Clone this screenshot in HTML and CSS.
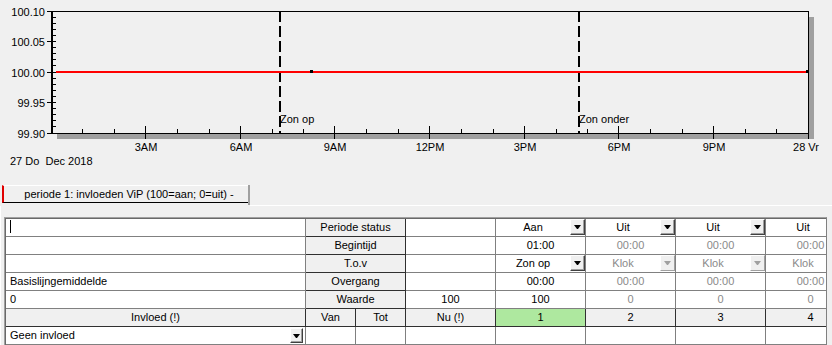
FILE: index.html
```html
<!DOCTYPE html>
<html lang="nl">
<head>
    <meta charset="UTF-8">
    <title>Periode invloeden</title>
    <link rel="stylesheet" href="styles.css">
</head>
<body>
    <svg class="chart" width="832" height="185" viewBox="0 0 832 185">
        <!-- schaduw -->
        <rect x="57" y="134" width="757" height="5" fill="#a0a0a0"/>
        <rect x="809" y="17" width="5" height="122" fill="#a0a0a0"/>

        <!-- kader en assen -->
        <g stroke="#000" shape-rendering="crispEdges" fill="none">
            <path d="M51 11.5H808.5V133.5H51" stroke-width="1"/>
            <path d="M52 11V134" stroke-width="2"/>
            <path d="M47 11.5h9M47 41.5h9M47 72.5h9M47 102.5h9M47 133.5h9"/>
            <path d="M52 17.5h4M52 23.5h4M52 29.5h4M52 35.5h4M52 47.5h4M52 53.5h4M52 59.5h4M52 65.5h4M52 78.5h4M52 84.5h4M52 90.5h4M52 96.5h4M52 108.5h4M52 114.5h4M52 120.5h4M52 126.5h4"/>
            <path d="M145.5 126v13M240.5 126v13M334.5 126v13M429.5 126v13M524.5 126v13M618.5 126v13M713.5 126v13M808.5 133v6"/>
            <path d="M82.5 129v4M114.5 129v4M177.5 129v4M209.5 129v4M272.5 129v4M303.5 129v4M366.5 129v4M398.5 129v4M461.5 129v4M493.5 129v4M556.5 129v4M587.5 129v4M650.5 129v4M682.5 129v4M745.5 129v4M776.5 129v4"/>
            <path d="M280 11V133M579 11V133" stroke-width="2" stroke-dasharray="11 4"/>
        </g>

        <!-- waarde -->
        <rect x="56" y="71" width="752" height="2" fill="#ff0000"/>
        <rect x="310" y="70" width="3" height="3" fill="#000"/>
        <rect x="806" y="70" width="3" height="3" fill="#000"/>

        <g class="ylabels" text-anchor="end">
            <text x="45" y="15.5">100.10</text>
            <text x="45" y="45.5">100.05</text>
            <text x="45" y="76.5">100.00</text>
            <text x="45" y="106.5">99.95</text>
            <text x="45" y="137.5">99.90</text>
        </g>
        <g class="xlabels" text-anchor="middle">
            <text x="146" y="151">3AM</text>
            <text x="241" y="151">6AM</text>
            <text x="335" y="151">9AM</text>
            <text x="430" y="151">12PM</text>
            <text x="525" y="151">3PM</text>
            <text x="619" y="151">6PM</text>
            <text x="714" y="151">9PM</text>
            <text x="806" y="151">28 Vr</text>
        </g>
        <text x="10" y="165" class="date">27 Do  Dec 2018</text>
        <text x="280" y="123">Zon op</text>
        <text x="579" y="123">Zon onder</text>
    </svg>

    <div class="tabbar">
        <div class="tab">periode 1: invloeden ViP (100=aan; 0=uit) -</div>
        <div class="tab-edge"></div>
        <div class="tab-rest"></div>
    </div>

    <div class="page">
        <div class="frame">
            <div class="grid">
                <div class="row">
                    <div class="cell name"><span class="caret"></span></div>
                    <div class="cell label hd">Periode status</div>
                    <div class="cell now"></div>
                    <div class="cell per combo"><span class="txt">Aan</span><span class="drop"></span></div>
                    <div class="cell per combo"><span class="txt">Uit</span><span class="drop"></span></div>
                    <div class="cell per combo"><span class="txt">Uit</span><span class="drop"></span></div>
                    <div class="cell per combo"><span class="txt">Uit</span><span class="drop"></span></div>
                </div>
                <div class="row">
                    <div class="cell name"></div>
                    <div class="cell label hd">Begintijd</div>
                    <div class="cell now"></div>
                    <div class="cell per">01:00</div>
                    <div class="cell per off">00:00</div>
                    <div class="cell per off">00:00</div>
                    <div class="cell per off">00:00</div>
                </div>
                <div class="row">
                    <div class="cell name"></div>
                    <div class="cell label hd">T.o.v</div>
                    <div class="cell now"></div>
                    <div class="cell per combo"><span class="txt">Zon op</span><span class="drop"></span></div>
                    <div class="cell per combo off"><span class="txt">Klok</span><span class="drop"></span></div>
                    <div class="cell per combo off"><span class="txt">Klok</span><span class="drop"></span></div>
                    <div class="cell per combo off"><span class="txt">Klok</span><span class="drop"></span></div>
                </div>
                <div class="row">
                    <div class="cell name">Basislijngemiddelde</div>
                    <div class="cell label hd">Overgang</div>
                    <div class="cell now"></div>
                    <div class="cell per">00:00</div>
                    <div class="cell per off">00:00</div>
                    <div class="cell per off">00:00</div>
                    <div class="cell per off">00:00</div>
                </div>
                <div class="row">
                    <div class="cell name">0</div>
                    <div class="cell label hd">Waarde</div>
                    <div class="cell now">100</div>
                    <div class="cell per">100</div>
                    <div class="cell per off">0</div>
                    <div class="cell per off">0</div>
                    <div class="cell per off">0</div>
                </div>
                <div class="row">
                    <div class="cell name hd">Invloed (!)</div>
                    <div class="cell half hd">Van</div>
                    <div class="cell half hd">Tot</div>
                    <div class="cell now hd">Nu (!)</div>
                    <div class="cell per hd active">1</div>
                    <div class="cell per hd">2</div>
                    <div class="cell per hd">3</div>
                    <div class="cell per hd">4</div>
                </div>
                <div class="row">
                    <div class="cell name combo left"><span class="txt">Geen invloed</span><span class="drop small"></span></div>
                    <div class="cell half"></div>
                    <div class="cell half"></div>
                    <div class="cell now"></div>
                    <div class="cell per"></div>
                    <div class="cell per"></div>
                    <div class="cell per"></div>
                    <div class="cell per"></div>
                </div>
            </div>
        </div>
    </div>
</body>
</html>
```

FILE: styles.css
```css
* {
    box-sizing: border-box;
}
body {
    margin: 0;
    width: 832px;
    height: 345px;
    overflow: hidden;
    background-color: #f0f0f0;
    font-family: "Liberation Sans", Arial, sans-serif;
    font-size: 11px;
    color: #000;
}
.chart {
    display: block;
}
.chart text {
    font-family: "Liberation Sans", Arial, sans-serif;
    font-size: 11px;
    fill: #000;
}
.chart .date {
    white-space: pre;
}

.tabbar {
    display: flex;
    height: 21px;
}
.tab {
    margin-left: 2px;
    width: 246px;
    height: 18px;
    padding-left: 6px;
    border-top: 1px solid #fff;
    border-bottom: 1px solid #000;
    border-left: 2px solid #e00000;
    text-align: center;
    line-height: 16px;
    white-space: nowrap;
}
.tab-edge {
    width: 2px;
    height: 20px;
    background-color: #a0a0a0;
}
.tab-rest {
    flex: 1;
    border-bottom: 1px solid #fff;
}

.page {
    display: flex;
    padding: 11px 0 0 3px;
    border-left: 1px solid #fff;
}
.frame {
    width: 823px;
    height: 128px;
    overflow: hidden;
    border-top: 1px solid #a0a0a0;
    border-left: 1px solid #a0a0a0;
    border-right: 1px solid #808080;
}
.grid {
    width: 900px;
    border-top: 1px solid #696969;
    border-left: 1px solid #696969;
}
.row {
    display: flex;
    height: 18px;
}
.cell {
    flex: none;
    height: 18px;
    line-height: 17px;
    border-right: 1px solid #808080;
    border-bottom: 1px solid #808080;
    background-color: #fff;
    text-align: center;
    white-space: nowrap;
    overflow: hidden;
}
.name {
    width: 300px;
    padding-left: 4px;
    text-align: left;
}
.label {
    width: 100px;
}
.half {
    width: 50px;
}
.now,
.per {
    width: 90px;
}
.hd {
    background-color: #f0f0f0;
    border-right-color: #303030;
    border-bottom-color: #303030;
    padding-left: 0;
    text-align: center;
}
.hd.active {
    background-color: #aee89f;
}
.off {
    color: #8a8a8a;
}

.caret {
    display: inline-block;
    width: 1px;
    height: 13px;
    margin-top: 1px;
    background-color: #000;
    vertical-align: top;
}

.combo {
    display: flex;
}
.combo .txt {
    flex: 1;
}
.combo.left .txt {
    text-align: left;
}
.drop {
    flex: none;
    display: flex;
    align-items: center;
    justify-content: center;
    width: 15px;
    height: 16px;
    border: 1px solid;
    border-color: #fff #404040 #404040 #fff;
    background-color: #f0f0f0;
    box-shadow: inset -1px -1px 0 #a0a0a0;
}
.drop::before {
    content: "";
    width: 1px;
    height: 0;
    border-left: 3px solid transparent;
    border-right: 3px solid transparent;
    border-top: 4px solid #000;
}
.off .drop {
    border-color: #fff #a0a0a0 #a0a0a0 #fff;
    box-shadow: none;
}
.off .drop::before {
    border-top-color: #a0a0a0;
}
.drop.small {
    width: 13px;
    height: 15px;
    margin: 1px 2px 0 0;
}
```
